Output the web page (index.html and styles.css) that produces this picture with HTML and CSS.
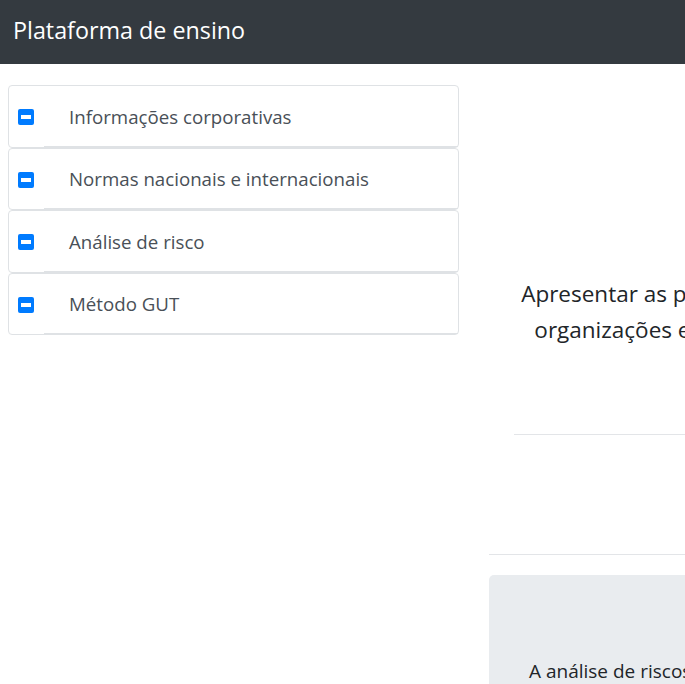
FILE: index.html
```html
<!DOCTYPE html>
<html lang="pt">
<head>
<meta charset="utf-8">
<title>Plataforma de ensino</title>
<link rel="stylesheet" href="styles.css">
</head>
<body>
<header class="navbar">
  <span class="brand">Plataforma de ensino</span>
</header>
<main class="layout">
  <aside class="sidebar">
    <ul class="topics">
      <li class="topic"><span class="toggle"></span><span class="topic-label">Informações corporativas</span></li>
      <li class="topic"><span class="toggle"></span><span class="topic-label">Normas nacionais e internacionais</span></li>
      <li class="topic"><span class="toggle"></span><span class="topic-label">Análise de risco</span></li>
      <li class="topic"><span class="toggle"></span><span class="topic-label">Método GUT</span></li>
    </ul>
  </aside>
  <section class="content">
    <div class="intro">
      <p class="objective">Apresentar as principais normas de gestão em<br>organizações e instituições públicas do Pará</p>
    </div>
    <div class="spacer"></div>
    <div class="panel">
      <p>A análise de riscos é uma ferramenta de gestão</p>
    </div>
  </section>
</main>
</body>
</html>
```
FILE: styles.css
```css
html, body {
  margin: 0;
  padding: 0;
  overflow: hidden;
}
body {
  font-family: "Open Sans", "Noto Sans", sans-serif;
  color: #212529;
  background: #fff;
  width: 1100px;
}
.navbar {
  height: 64px;
  background: #343a40;
  display: flex;
  align-items: center;
  padding: 0 13px;
  box-sizing: border-box;
}
.brand {
  color: #fff;
  font-size: 23.3px;
  line-height: 1;
  padding-bottom: 2px;
}
.layout {
  display: flex;
  gap: 30px;
  padding: 21px 8px 0;
}
.sidebar {
  width: 451px;
  flex: none;
}
.topics {
  list-style: none;
  margin: 0;
  padding: 0;
  display: flex;
  flex-direction: column;
}
.topic {
  display: flex;
  align-items: stretch;
  height: 62.5px;
  box-sizing: border-box;
  border: 1px solid #dfe2e5;
  border-radius: 4px;
}
.toggle {
  width: 16px;
  height: 16px;
  background: #007bff;
  border-radius: 2px;
  margin: 23px 0 0 9px;
  flex: none;
  position: relative;
}
.toggle::after {
  content: "";
  position: absolute;
  left: 3px;
  right: 3px;
  top: 6px;
  height: 4px;
  background: #fff;
}
.topic-label {
  flex: 1;
  margin-left: 10px;
  padding-left: 25px;
  font-size: 18.7px;
  color: #495057;
  display: flex;
  align-items: center;
  border-bottom: 1px solid #dfe2e5;
  padding-top: 1px;
}
.content {
  width: 526px;
  flex: none;
}
.intro {
  margin-left: 25px;
  height: 350px;
  box-sizing: border-box;
  padding-top: 191px;
  border-bottom: 1px solid #e3e5e8;
}
.objective {
  margin: 0;
  font-size: 22.5px;
  line-height: 36px;
  text-align: center;
  white-space: nowrap;
}
.spacer {
  height: 119px;
  border-bottom: 1px solid #e3e5e8;
}
.panel {
  margin-top: 20px;
  background: #e9ecef;
  border-radius: 5px;
  height: 200px;
  padding: 83px 40px 0;
  box-sizing: border-box;
}
.panel p {
  margin: 0;
  font-size: 19px;
}
```
